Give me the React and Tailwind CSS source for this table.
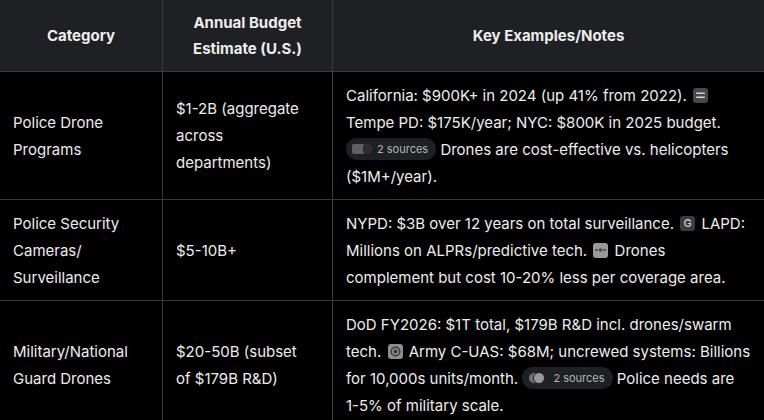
import React from "react";

const Sq = ({ children, cls = "bg-[#3b3d40]" }) => (
  <span className={`inline-flex items-center justify-center align-middle relative -top-px w-[15px] h-[15px] rounded-[3px] mx-[2px] ${cls}`}>
    {children}
  </span>
);

const IconLines = () => (
  <Sq cls="bg-[#48494c]">
    <svg width="9" height="7" viewBox="0 0 9 7">
      <rect x="0" y="0.5" width="9" height="1.6" rx="0.8" fill="#d8d8d8" />
      <rect x="0" y="4.5" width="9" height="1.6" rx="0.8" fill="#d8d8d8" />
    </svg>
  </Sq>
);

const IconG = () => (
  <Sq cls="bg-[#3a3c3f]">
    <span className="text-[11px] leading-none text-[#d0d0d0] font-medium">G</span>
  </Sq>
);

const IconBox = () => (
  <Sq cls="bg-[#9a9a9a]">
    <svg width="11" height="5" viewBox="0 0 11 5">
      <rect x="0" y="1" width="3" height="2" fill="#555" />
      <rect x="4" y="0.5" width="3" height="3" fill="#444" />
      <rect x="8" y="1" width="3" height="2" fill="#555" />
    </svg>
  </Sq>
);

const IconRing = () => (
  <Sq cls="bg-[#8e8e8e]">
    <svg width="11" height="11" viewBox="0 0 11 11">
      <circle cx="5.5" cy="5.5" r="4.3" fill="none" stroke="#3a3a3a" strokeWidth="1.4" />
      <circle cx="5.5" cy="5.5" r="2" fill="#3a3a3a" />
    </svg>
  </Sq>
);

const Pill1 = () => (
  <span className="inline-flex items-center gap-[4px] h-[22px] pl-[6px] pr-[8px] rounded-full bg-[#1f2023] align-middle relative -top-px">
    <span className="relative inline-block w-[21px] h-[12px]">
      <span className="absolute left-0 top-[1px] w-[13px] h-[10px] rounded-[2px] bg-[#5e5f61]" />
      <span className="absolute left-[11px] top-0 w-[10px] h-[12px] rounded-full bg-[#2e2f31] border border-[#1f2023]" />
    </span>
    <span className="text-[11px] leading-none text-[#b4b4b4]">2 sources</span>
  </span>
);

const Pill2 = () => (
  <span className="inline-flex items-center gap-[8px] h-[22px] pl-[6px] pr-[8px] rounded-full bg-[#1f2023] align-middle relative -top-px">
    <span className="relative inline-block w-[17px] h-[12px]">
      <span className="absolute left-0 top-0 w-[12px] h-[12px] rounded-full bg-[#6f6f6f] border border-[#1f2023]" />
      <span className="absolute left-[5px] top-0 w-[12px] h-[12px] rounded-full bg-[#9a9a9a] border border-[#1f2023]" />
    </span>
    <span className="text-[11px] leading-none text-[#b4b4b4]">2 sources</span>
  </span>
);

const td = "border border-[#3a3a3a] px-[13px] py-[9px] align-middle";
const th = "border border-[#3a3a3a] px-[13px] py-[9px] font-bold text-center align-middle";

export default function App() {
  return (
    <div
      className="w-[764px] h-[420px] overflow-hidden bg-black text-[#ededed]"
      style={{ fontFamily: "Inter, 'Noto Sans', sans-serif" }}
    >
      <table className="border-collapse -ml-px -mt-px table-fixed w-[766px] text-[15px] leading-[27px]">
        <colgroup>
          <col className="w-[163px]" />
          <col className="w-[170px]" />
          <col />
        </colgroup>
        <thead className="bg-[#1e2023]">
          <tr className="h-[72px]">
            <th className={th}>Category</th>
            <th className={`${th} leading-[26px]`}>
              Annual Budget
              <br />
              Estimate (U.S.)
            </th>
            <th className={th}>Key Examples/Notes</th>
          </tr>
        </thead>
        <tbody>
          <tr className="h-[128px]">
            <td className={td}>
              Police Drone
              <br />
              Programs
            </td>
            <td className={td}>
              $1-2B (aggregate
              <br />
              across
              <br />
              departments)
            </td>
            <td className={`${td} whitespace-nowrap`}>
              California: $900K+ in 2024 (up 41% from 2022). <IconLines />
              <br />
              Tempe PD: $175K/year; NYC: $800K in 2025 budget.
              <br />
              <Pill1 /> Drones are cost-effective vs. helicopters
              <br />
              ($1M+/year).
            </td>
          </tr>
          <tr className="h-[101px]">
            <td className={td}>
              Police Security
              <br />
              Cameras/
              <br />
              Surveillance
            </td>
            <td className={td}>$5-10B+</td>
            <td className={`${td} whitespace-nowrap`}>
              NYPD: $3B over 12 years on total surveillance. <IconG /> LAPD:
              <br />
              Millions on ALPRs/predictive tech. <IconBox /> Drones
              <br />
              complement but cost 10-20% less per coverage area.
            </td>
          </tr>
          <tr className="h-[128px]">
            <td className={td}>
              Military/National
              <br />
              Guard Drones
            </td>
            <td className={td}>
              $20-50B (subset
              <br />
              of $179B R&amp;D)
            </td>
            <td className={`${td} whitespace-nowrap`}>
              DoD FY2026: $1T total, $179B R&amp;D incl. drones/swarm
              <br />
              tech. <IconRing /> Army C-UAS: $68M; uncrewed systems: Billions
              <br />
              for 10,000s units/month. <Pill2 /> Police needs are
              <br />
              1-5% of military scale.
            </td>
          </tr>
        </tbody>
      </table>
    </div>
  );
}
